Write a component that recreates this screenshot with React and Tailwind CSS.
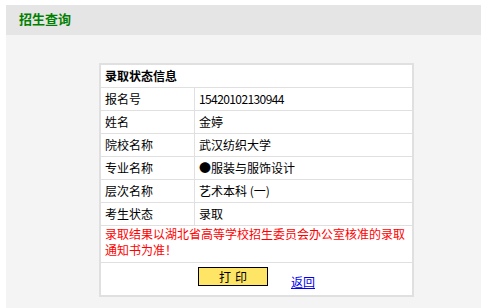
import React from 'react';

const rows = [
  { label: '报名号', value: '15420102130944', num: true },
  { label: '姓名', value: '金婷' },
  { label: '院校名称', value: '武汉纺织大学' },
  { label: '专业名称', value: '●服装与服饰设计' },
  { label: '层次名称', value: '艺术本科 (一)' },
  { label: '考生状态', value: '录取' },
];

const App = () => {
  return (
    <div className="h-screen overflow-hidden bg-white pl-[6px] pt-[5px] text-[12px] leading-[16px] text-black font-['Noto_Sans_CJK_SC','Noto_Sans',sans-serif]">
      <div className="h-full bg-[#f4f4f4]">
        <div className="flex h-[30px] items-center bg-[#e5e5e5] pb-[3px] pl-[13px] text-[13px] font-bold text-[#008000]">
          招生查询
        </div>

        <div className="ml-[93px] mt-[28px] w-[315px] border-2 border-[#e0e0e0] bg-white">
          <div className="flex h-[23px] items-center border-b border-[#e0e0e0] pl-[4px] font-bold">
            录取状态信息
          </div>

          {rows.map((r) => (
            <div key={r.label} className="flex h-[23px] border-b border-[#e0e0e0]">
              <div className="flex w-[94px] items-center border-r border-[#e0e0e0] pl-[4px]">{r.label}</div>
              <div className={`flex items-center whitespace-pre pl-[4px] ${r.num ? 'tracking-[-0.6px]' : ''}`}>{r.value}</div>
            </div>
          ))}

          <div className="h-[37px] border-b border-[#e0e0e0] pl-[4px] pr-[2px] text-[#ff0000]">
            录取结果以湖北省高等学校招生委员会办公室核准的录取通知书为准！
          </div>

          <div className="flex h-[32px] items-start justify-center gap-[23px]">
            <button className="mt-[4px] flex h-[19px] w-[70px] items-center justify-center gap-[4px] border border-black bg-[#ffe566] text-[12px]">
              <span>打</span>
              <span>印</span>
            </button>
            <a href="#" className="mt-[11px] text-[#0000ee] underline">
              返回
            </a>
          </div>
        </div>
      </div>
    </div>
  );
};

export default App;
